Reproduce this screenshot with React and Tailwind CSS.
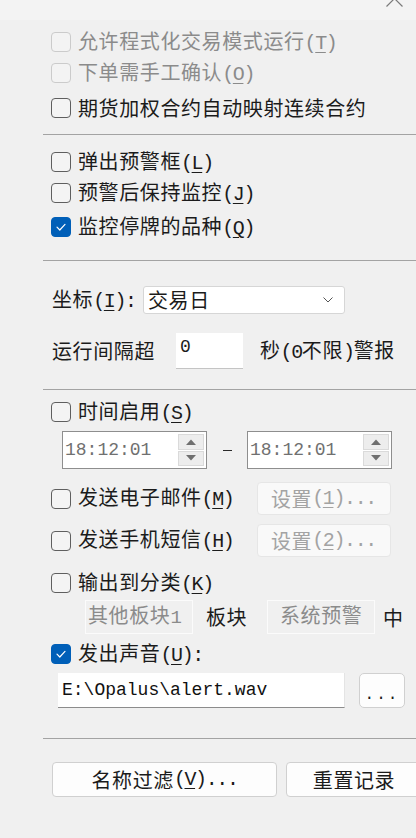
import React from "react";

const FONT = { fontFamily: '"Noto Sans CJK SC", "Liberation Sans", sans-serif' };

function Box({ checked, disabled }) {
  return (
    <span
      className={
        "flex h-[20px] w-[20px] shrink-0 items-center justify-center rounded-[4px] border " +
        (checked
          ? "border-[#005fb8] bg-[#005fb8]"
          : disabled
          ? "border-[#cbcbcb] bg-[#f3f3f3]"
          : "border-[#5f5f5f] bg-[#f4f4f4]")
      }
    >
      {checked && (
        <svg width="12" height="10" viewBox="0 0 12 10" fill="none">
          <polyline points="2,5.2 4.8,8 10,2.4" stroke="#ffffff" strokeWidth="1.2" strokeLinecap="round" strokeLinejoin="round" />
        </svg>
      )}
    </span>
  );
}

function Acc({ children, end }) {
  return (
    <span className="font-['Liberation_Mono'] text-[20px] tracking-[-1.4px]">
      (<span className="underline underline-offset-[3px] decoration-1">{children}</span>){end}
    </span>
  );
}

function CheckLabel({ checked, disabled, children }) {
  return (
    <div className="flex items-center gap-[7px]">
      <Box checked={checked} disabled={disabled} />
      <span className={"whitespace-nowrap leading-none tracking-[0.6px] " + (disabled ? "text-[#8b8b8b]" : "text-[#1b1b1b]")}>
        {children}
      </span>
    </div>
  );
}

function Divider({ className }) {
  return <div className={"ml-[43px] h-px bg-[#a3a3a3] " + className} />;
}

function Spin() {
  return (
    <div className="flex h-[38px] w-[145px] items-stretch border border-[#8e8e8e] bg-white">
      <div className="flex flex-1 items-center pl-[2px] font-['Liberation_Mono'] text-[18px] text-[#707070]">18:12:01</div>
      <div className="flex w-[28px] flex-col gap-[1px] py-[2px] pr-[2px]">
        <div className="flex flex-1 items-center justify-center border border-[#dadada] bg-[#ededed]">
          <svg width="10" height="6" viewBox="0 0 10 6"><polygon points="0,6 5,0.5 10,6" fill="#6f6f6f" /></svg>
        </div>
        <div className="flex flex-1 items-center justify-center border border-[#dadada] bg-[#ededed]">
          <svg width="10" height="6" viewBox="0 0 10 6"><polygon points="0,0 5,5.5 10,0" fill="#6f6f6f" /></svg>
        </div>
      </div>
    </div>
  );
}

function DisabledBtn({ children }) {
  return (
    <div className="flex h-[33px] w-[134px] items-center rounded-[4px] border border-[#e6e6e6] bg-[#f9f9f9] pl-[13px] text-[#a3a3a3] tracking-[0.6px]">
      {children}
    </div>
  );
}

export default function App() {
  return (
    <div className="flex h-[838px] w-[416px] flex-col overflow-hidden bg-[#f0f0f0] text-[20px] text-[#1b1b1b]" style={FONT}>
      <div className="flex h-[20px] shrink-0 justify-end bg-[#f3f3f3] pr-[13px]">
        <svg width="17" height="8" viewBox="0 0 17 8" className="-mt-[1px]">
          <polyline points="0.5,7.5 8.5,-0.5 16.5,7.5" fill="none" stroke="#7a7a7a" strokeWidth="1.2" />
        </svg>
      </div>

      <div className="mt-[7px] flex h-[30px] shrink-0 items-center pl-[51px]">
        <CheckLabel disabled>允许程式化交易模式运行<Acc>T</Acc></CheckLabel>
      </div>
      <div className="mt-[1px] flex h-[30px] shrink-0 items-center pl-[51px]">
        <CheckLabel disabled>下单需手工确认<Acc>O</Acc></CheckLabel>
      </div>
      <div className="mt-[5px] flex h-[30px] shrink-0 items-center pl-[51px]">
        <CheckLabel>期货加权合约自动映射连续合约</CheckLabel>
      </div>

      <Divider className="mt-[11px] shrink-0" />

      <div className="mt-[12px] flex h-[30px] shrink-0 items-center pl-[51px]">
        <CheckLabel>弹出预警框<Acc>L</Acc></CheckLabel>
      </div>
      <div className="mt-[1px] flex h-[30px] shrink-0 items-center pl-[51px]">
        <CheckLabel>预警后保持监控<Acc>J</Acc></CheckLabel>
      </div>
      <div className="mt-[4px] flex h-[30px] shrink-0 items-center pl-[51px]">
        <CheckLabel checked>监控停牌的品种<Acc>Q</Acc></CheckLabel>
      </div>

      <Divider className="mt-[18px] shrink-0" />

      <div className="mt-[25px] flex h-[28px] shrink-0 items-center pl-[52px]">
        <span className="w-[91px] whitespace-nowrap leading-none tracking-[0.6px]">坐标<Acc end=":">I</Acc></span>
        <div className="flex h-[28px] w-[202px] items-center justify-between rounded-[3px] border border-[#d6d6d6] bg-white pl-[4px] pr-[11px]">
          <span className="leading-none tracking-[0.6px]">交易日</span>
          <svg width="10" height="6" viewBox="0 0 10 6" fill="none">
            <polyline points="0.5,0.5 5,5 9.5,0.5" stroke="#555" strokeWidth="1" />
          </svg>
        </div>
      </div>

      <div className="mt-[19px] flex h-[36px] shrink-0 items-center pl-[52px]">
        <span className="w-[124px] whitespace-nowrap leading-none tracking-[0.6px]">运行间隔超</span>
        <div className="h-[36px] w-[67px] border-b border-[#c4c4c4] bg-white pl-[4px] pt-[3px] font-['Liberation_Mono'] text-[18px] leading-[22px]">0</div>
        <span className="ml-[17px] whitespace-nowrap leading-none tracking-[0.6px]">
          秒<span className="font-['Liberation_Mono'] text-[20px] tracking-[-1.4px]">(0</span>不限<span className="font-['Liberation_Mono'] text-[20px] tracking-[-1.4px]">)</span>警报
        </span>
      </div>

      <Divider className="mt-[20px] shrink-0" />

      <div className="mt-[7px] flex h-[30px] shrink-0 items-center pl-[51px]">
        <CheckLabel>时间启用<Acc>S</Acc></CheckLabel>
      </div>

      <div className="mt-[4px] flex h-[38px] shrink-0 items-center pl-[62px]">
        <Spin />
        <div className="flex w-[40px] justify-center">
          <div className="h-px w-[9px] bg-[#2a2a2a]" />
        </div>
        <Spin />
      </div>

      <div className="mt-[13px] flex h-[33px] shrink-0 items-center pl-[51px]">
        <div className="w-[206px]">
          <CheckLabel>发送电子邮件<Acc>M</Acc></CheckLabel>
        </div>
        <DisabledBtn>设置<Acc end="...">1</Acc></DisabledBtn>
      </div>
      <div className="mt-[9px] flex h-[33px] shrink-0 items-center pl-[51px]">
        <div className="w-[206px]">
          <CheckLabel>发送手机短信<Acc>H</Acc></CheckLabel>
        </div>
        <DisabledBtn>设置<Acc end="...">2</Acc></DisabledBtn>
      </div>

      <div className="mt-[11px] flex h-[30px] shrink-0 items-center pl-[51px]">
        <CheckLabel>输出到分类<Acc>K</Acc></CheckLabel>
      </div>

      <div className="mt-[2px] flex h-[34px] shrink-0 items-stretch pl-[85px]">
        <div className="w-[108px] border border-[#fbfbfb] pl-[2px] pt-[3px] leading-[22px] tracking-[0.6px] text-[#8b8b8b]">
          其他板块<span className="font-['Liberation_Mono'] text-[19px]">1</span>
        </div>
        <div className="flex w-[74px] items-center pl-[13px] tracking-[0.6px]">板块</div>
        <div className="w-[108px] border border-[#fbfbfb] pl-[12px] pt-[3px] leading-[22px] tracking-[0.6px] text-[#8b8b8b]">系统预警</div>
        <div className="flex items-end pb-[1px] pl-[8px]">中</div>
      </div>

      <div className="mt-[5px] flex h-[30px] shrink-0 items-center pl-[51px]">
        <CheckLabel checked>发出声音<Acc end=":">U</Acc></CheckLabel>
      </div>

      <div className="mt-[4px] flex h-[35px] shrink-0 items-stretch pl-[58px]">
        <div className="flex w-[287px] items-center border-r border-b border-r-[#e4e4e4] border-b-[#8c8c8c] bg-white pl-[4px] font-['Liberation_Mono'] text-[18px] text-[#111]">
          E:\Opalus\alert.wav
        </div>
        <div className="ml-[14px] flex w-[46px] items-end justify-center rounded-[5px] border border-[#d0d0d0] bg-[#fdfdfd] pb-[4px] font-['Liberation_Mono'] text-[16px] leading-none tracking-[2px] text-[#1a1a1a]">
          ...
        </div>
      </div>

      <Divider className="mt-[30px] shrink-0" />

      <div className="mt-[23px] flex h-[35px] shrink-0 items-stretch pl-[52px]">
        <div className="flex w-[225px] shrink-0 items-center justify-center rounded-[4px] border border-[#d0d0d0] bg-[#fdfdfd] tracking-[0.6px]">
          名称过滤<Acc end="...">V</Acc>
        </div>
        <div className="ml-[9px] flex w-[136px] shrink-0 items-center justify-center rounded-[4px] border border-[#d0d0d0] bg-[#fdfdfd] tracking-[0.6px]">
          重置记录
        </div>
      </div>
    </div>
  );
}
